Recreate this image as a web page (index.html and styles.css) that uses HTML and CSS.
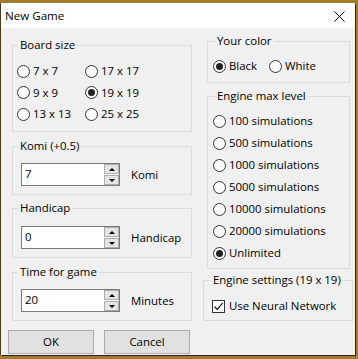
FILE: index.html
```html
<!DOCTYPE html>
<html lang="en">
<head>
    <meta charset="UTF-8">
    <title>New Game</title>
    <link rel="stylesheet" href="styles.css">
</head>
<body>
    <div class="window">
        <div class="titlebar">
            <span class="title">New Game</span>
            <svg class="close" width="11" height="11" viewBox="0 0 11 11">
                <path d="M0.5 0.5 L10.5 10.5 M10.5 0.5 L0.5 10.5" stroke="#000" stroke-width="1" fill="none"/>
            </svg>
        </div>
        <div class="client">
            <div class="col-left">
                <fieldset class="group board">
                    <legend>Board size</legend>
                    <div class="radio-grid">
                        <label class="opt"><span class="radio"></span>7 x 7</label>
                        <label class="opt"><span class="radio"></span>17 x 17</label>
                        <label class="opt"><span class="radio"></span>9 x 9</label>
                        <label class="opt"><span class="radio checked"></span>19 x 19</label>
                        <label class="opt"><span class="radio"></span>13 x 13</label>
                        <label class="opt"><span class="radio"></span>25 x 25</label>
                    </div>
                </fieldset>

                <fieldset class="group spin-group komi">
                    <legend>Komi (+0.5)</legend>
                    <div class="spin-row">
                        <div class="spin">
                            <div class="spin-text">7</div>
                            <div class="spin-btns">
                                <span class="spin-btn"><i class="arrow-up"></i></span>
                                <span class="spin-btn"><i class="arrow-down"></i></span>
                            </div>
                        </div>
                        <span class="spin-label">Komi</span>
                    </div>
                </fieldset>

                <fieldset class="group spin-group handicap">
                    <legend>Handicap</legend>
                    <div class="spin-row">
                        <div class="spin">
                            <div class="spin-text">0</div>
                            <div class="spin-btns">
                                <span class="spin-btn"><i class="arrow-up"></i></span>
                                <span class="spin-btn"><i class="arrow-down"></i></span>
                            </div>
                        </div>
                        <span class="spin-label">Handicap</span>
                    </div>
                </fieldset>

                <fieldset class="group spin-group time">
                    <legend>Time for game</legend>
                    <div class="spin-row">
                        <div class="spin">
                            <div class="spin-text">20</div>
                            <div class="spin-btns">
                                <span class="spin-btn"><i class="arrow-up"></i></span>
                                <span class="spin-btn"><i class="arrow-down"></i></span>
                            </div>
                        </div>
                        <span class="spin-label">Minutes</span>
                    </div>
                </fieldset>

                <div class="buttons">
                    <div class="btn">OK</div>
                    <div class="btn">Cancel</div>
                </div>
            </div>

            <div class="col-right">
                <fieldset class="group color">
                    <legend>Your color</legend>
                    <div class="color-row">
                        <label class="opt"><span class="radio checked"></span>Black</label>
                        <label class="opt"><span class="radio"></span>White</label>
                    </div>
                </fieldset>

                <fieldset class="group level">
                    <legend>Engine max level</legend>
                    <div class="level-list">
                        <label class="opt"><span class="radio"></span>100 simulations</label>
                        <label class="opt"><span class="radio"></span>500 simulations</label>
                        <label class="opt"><span class="radio"></span>1000 simulations</label>
                        <label class="opt"><span class="radio"></span>5000 simulations</label>
                        <label class="opt"><span class="radio"></span>10000 simulations</label>
                        <label class="opt"><span class="radio"></span>20000 simulations</label>
                        <label class="opt"><span class="radio checked"></span>Unlimited</label>
                    </div>
                </fieldset>

                <fieldset class="group engine">
                    <legend>Engine settings (19 x 19)</legend>
                    <label class="opt check-opt">
                        <span class="checkbox">
                            <svg width="11" height="11" viewBox="0 0 11 11">
                                <path d="M1.5 5.5 L4.2 8.5 L9.8 1.8" stroke="#222" stroke-width="1.2" fill="none"/>
                            </svg>
                        </span>Use Neural Network
                    </label>
                </fieldset>
            </div>
        </div>
    </div>
</body>
</html>
```

FILE: styles.css
```css
body {
    margin: 0;
    width: 358px;
    height: 359px;
    overflow: hidden;
    background: #a27b2f;
    font-family: "Open Sans", "Noto Sans", sans-serif;
    font-size: 11.4px;
    line-height: 16px;
    color: #000;
}
.window {
    margin: 3px 0 0 1px;
    width: 354px;
    height: 352px;
    background: #f0f0f0;
    box-shadow: 1px 1px 0 #2b2417, -1px 0 0 #4a3a1c;
}
.titlebar {
    height: 25px;
    background: #fff;
    display: flex;
    align-items: center;
    justify-content: space-between;
    padding: 0 10px 0 4px;
}
.title {
    font-size: 11.6px;
    margin-top: 1px;
}
.close {
    display: block;
    margin-top: 2px;
}
.client {
    display: flex;
    align-items: flex-start;
}
.col-left {
    width: 180px;
    padding: 9px 0 0 11px;
    display: flex;
    flex-direction: column;
}
.col-right {
    width: 150px;
    margin-left: 11px;
    padding-top: 5px;
    display: flex;
    flex-direction: column;
}
.group {
    box-sizing: border-box;
    margin: 0;
    padding: 0;
    min-width: 0;
    border: 1px solid #dcdcdc;
}
.group legend {
    margin-left: 5px;
    padding: 0 2px;
    line-height: 16px;
}
.col-right .group legend {
    margin-left: 7px;
}
.opt {
    display: flex;
    align-items: center;
    height: 22px;
    white-space: nowrap;
}
.radio {
    box-sizing: border-box;
    width: 13px;
    height: 13px;
    border: 1px solid #333;
    border-radius: 50%;
    background: #fff;
    margin-right: 3px;
    display: flex;
    align-items: center;
    justify-content: center;
    flex-shrink: 0;
}
.radio.checked::after {
    content: "";
    width: 7px;
    height: 7px;
    border-radius: 50%;
    background: #222;
}

/* board size */
.board {
    height: 95px;
}
.radio-grid {
    display: grid;
    grid-template-columns: 68px 1fr;
    grid-auto-rows: 21.5px;
    padding: 7.5px 0 0 4px;
}
.radio-grid .opt {
    height: 21.5px;
}

/* spin boxes */
.spin-group {
    height: 57px;
    margin-top: 6px;
}
.handicap {
    height: 58px;
    margin-top: 5px;
}
.spin-row {
    display: flex;
    align-items: center;
    padding: 9px 0 0 8px;
}
.handicap .spin-row {
    padding-top: 10px;
}
.spin {
    display: flex;
    height: 23px;
}
.spin-text {
    box-sizing: border-box;
    width: 83px;
    height: 23px;
    border: 1px solid #7a7a7a;
    border-right: none;
    background: #fff;
    padding: 2px 0 0 3px;
}
.spin-btns {
    box-sizing: border-box;
    width: 16px;
    height: 23px;
    border: 1px solid #7a7a7a;
    border-left: none;
    background: #fff;
    display: flex;
    flex-direction: column;
    justify-content: space-between;
}
.spin-btn {
    box-sizing: border-box;
    height: 10px;
    border: 1px solid #adadad;
    background: #e5e5e5;
    display: flex;
    align-items: center;
    justify-content: center;
}
.arrow-up {
    width: 0;
    height: 0;
    border-left: 3px solid transparent;
    border-right: 3px solid transparent;
    border-bottom: 3px solid #000;
}
.arrow-down {
    width: 0;
    height: 0;
    border-left: 3px solid transparent;
    border-right: 3px solid transparent;
    border-top: 3px solid #000;
}
.spin-label {
    margin-left: 11px;
}

/* dialog buttons */
.buttons {
    display: flex;
    gap: 10px;
    margin: 9px 0 0 -4px;
}
.btn {
    box-sizing: border-box;
    width: 86px;
    height: 24px;
    border: 1px solid #adadad;
    background: #e1e1e1;
    display: flex;
    align-items: center;
    justify-content: center;
}

/* right column */
.color {
    height: 50px;
    margin-left: 4px;
    width: 143px;
}
.color-row {
    display: flex;
    gap: 12px;
    padding: 6px 0 0 5px;
}
.level {
    height: 181px;
    margin: 5px 0 0 4px;
    width: 143px;
}
.level-list {
    padding: 6px 0 0 5px;
}
.engine {
    height: 49px;
    margin-top: 3px;
    width: 150px;
}
.check-opt {
    padding: 7px 0 0 8px;
}
.checkbox {
    box-sizing: border-box;
    width: 13px;
    height: 13px;
    border: 1px solid #333;
    background: #fff;
    margin-right: 4px;
    display: flex;
    align-items: center;
    justify-content: center;
}
.checkbox svg {
    display: block;
}
```
